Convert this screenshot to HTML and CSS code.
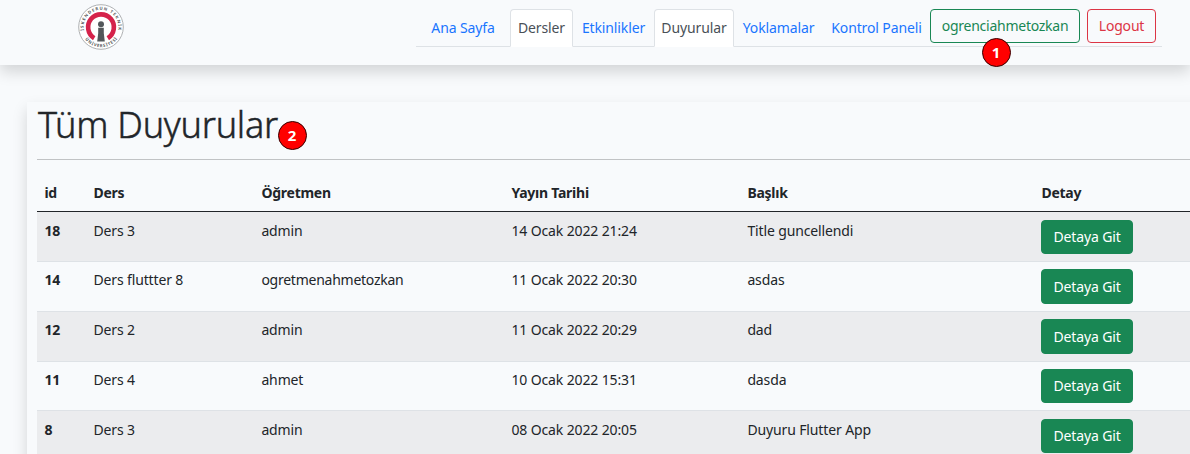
FILE: index.html
```html
<!DOCTYPE html>
<html lang="tr">
<head>
<meta charset="utf-8">
<title>Tüm Duyurular</title>
<link rel="stylesheet" href="styles.css">
</head>
<body>
<header class="navbar">
  <svg class="logo" viewBox="0 0 46 46" role="img" aria-label="İskenderun Teknik Üniversitesi">
    <defs>
      <path id="arc-top" d="M5.9 26.5 A17.4 17.4 0 1 1 40.1 26.5"/>
      <path id="arc-bottom" d="M6.5 34.6 A20.2 20.2 0 0 0 39.5 34.6"/>
    </defs>
    <circle cx="23" cy="23" r="22.3" fill="#fff" stroke="#9b9da0" stroke-width=".8"/>
    <path d="M16.2 34.2 A12.9 12.9 0 1 1 29.8 34.2" fill="none" stroke="#d5234b" stroke-width="4.6"/>
    <circle cx="23" cy="20.3" r="3" fill="#53575a"/>
    <path d="M20.2 23.8h5.6v5.4l1 8.3h-7.6l1-8.3z" fill="#53575a"/>
    <text class="logo-text"><textPath href="#arc-top" startOffset="0" textLength="60">İSKENDERUN TEKNİK</textPath></text>
    <text class="logo-text"><textPath href="#arc-bottom" startOffset="1" textLength="37">ÜNİVERSİTESİ</textPath></text>
  </svg>
  <nav class="tabs">
    <a class="tab t1">Ana Sayfa</a>
    <a class="tab t2 active">Dersler</a>
    <a class="tab t3">Etkinlikler</a>
    <a class="tab t4 active">Duyurular</a>
    <a class="tab t5">Yoklamalar</a>
    <a class="tab t6">Kontrol Paneli</a>
    <a class="btn outline-success">ogrenciahmetozkan<span class="marker marker-user">1</span></a>
    <a class="btn outline-danger">Logout</a>
  </nav>
</header>
<main class="card">
  <h1><span class="title">Tüm Duyurular<span class="marker marker-title">2</span></span></h1>
  <table>
    <colgroup><col class="c1"><col class="c2"><col class="c3"><col class="c4"><col class="c5"><col class="c6"></colgroup>
    <thead><tr><th>id</th><th>Ders</th><th>Öğretmen</th><th>Yayın Tarihi</th><th>Başlık</th><th>Detay</th></tr></thead>
    <tbody>
      <tr><th>18</th><td>Ders 3</td><td>admin</td><td>14 Ocak 2022 21:24</td><td>Title guncellendi</td><td><a class="btn success">Detaya Git</a></td></tr>
      <tr class="tall"><th>14</th><td>Ders fluttter 8</td><td class="tight">ogretmenahmetozkan</td><td>11 Ocak 2022 20:30</td><td>asdas</td><td><a class="btn success">Detaya Git</a></td></tr>
      <tr class="tall"><th>12</th><td>Ders 2</td><td>admin</td><td>11 Ocak 2022 20:29</td><td>dad</td><td><a class="btn success">Detaya Git</a></td></tr>
      <tr class="short"><th>11</th><td>Ders 4</td><td>ahmet</td><td>10 Ocak 2022 15:31</td><td>dasda</td><td><a class="btn success">Detaya Git</a></td></tr>
      <tr><th>8</th><td>Ders 3</td><td>admin</td><td>08 Ocak 2022 20:05</td><td>Duyuru Flutter App</td><td><a class="btn success">Detaya Git</a></td></tr>
    </tbody>
  </table>
</main>
</body>
</html>
```
FILE: styles.css
```css
* { box-sizing: border-box; }
html { overflow: hidden; }
body {
  margin: 0;
  height: 454px;
  overflow: hidden;
  background: #f8fafc;
  color: #212529;
  font: 14px/21px "Noto Sans", sans-serif;
}
.navbar {
  display: flex;
  align-items: flex-start;
  height: 65px;
  padding-left: 78px;
  background: #f8fafc;
  box-shadow: 0 7px 14px rgba(0, 0, 0, .15);
}
.logo { width: 46px; height: 46px; margin-top: 4px; flex: none; }
.logo-text { font: 700 4.2px "Noto Sans", sans-serif; fill: #53575a; }
.tabs {
  display: flex;
  align-items: flex-start;
  width: 746px;
  height: 47px;
  margin-left: 292px;
  padding-top: 9px;
  border-bottom: 1px solid #dee2e6;
}
.tab {
  height: 38px;
  padding-top: 7px;
  border: 1px solid transparent;
  border-radius: 4px 4px 0 0;
  color: #1a75ff;
  text-align: center;
  white-space: nowrap;
  letter-spacing: -.12px;
}
.tab.active {
  color: #495057;
  background: #fff;
  border-color: #dee2e6 #dee2e6 #fff;
}
.t1 { width: 94px; }
.t2 { width: 63px; }
.t3 { width: 81px; }
.t4 { width: 80px; }
.t5 { width: 88px; padding-left: 1px; }
.t6 { width: 108px; padding-left: 1px; }
.btn {
  position: relative;
  display: block;
  height: 34px;
  padding-top: 5px;
  border: 1px solid;
  border-radius: 4px;
  text-align: center;
  white-space: nowrap;
}
.outline-success { width: 150px; color: #198754; letter-spacing: -.25px; }
.outline-danger { width: 69px; margin-left: 7px; color: #dc3545; letter-spacing: -.2px; }
.success {
  width: 92px;
  color: #fff;
  background: #198754;
  border-color: #198754;
}
.marker {
  position: absolute;
  width: 29px;
  height: 29px;
  border: 1px solid #300;
  border-radius: 50%;
  background: #f00;
  color: #fff;
  font: 700 15px/27px "Noto Sans", sans-serif;
  letter-spacing: 0;
  text-align: center;
  -webkit-text-stroke: 0;
}
.marker-user { left: 50.5px; top: 27.5px; }
.marker-title { left: 240.5px; top: 19px; }
.card {
  width: 1240px;
  height: 380px;
  margin: 37px 0 0 27px;
  padding: 0 10px;
  background: #f8fafc;
  box-shadow: 0 7px 14px rgba(0, 0, 0, .15);
}
h1 {
  height: 58px;
  margin: 0;
  border-bottom: 1px solid #c1c3c5;
  font-size: 36px;
  font-weight: 300;
  line-height: 46px;
  letter-spacing: -.25px;
  -webkit-text-stroke: .5px #212529;
}
.title { position: relative; display: inline-block; padding-left: 1px; white-space: nowrap; }
table {
  width: 1220px;
  margin-top: 14px;
  border-collapse: separate;
  border-spacing: 0;
  table-layout: fixed;
}
.c1 { width: 49px; }
.c2 { width: 168px; }
.c3 { width: 250px; }
.c4 { width: 236px; }
.c5 { width: 294px; }
th, td {
  padding: 8px 7px 0 7.4px;
  border-bottom: 1px solid #dee2e6;
  text-align: left;
  vertical-align: top;
  white-space: nowrap;
  letter-spacing: -.13px;
}
td:last-child { padding-left: 7px; }
thead th { height: 38px; border-bottom-color: #212529; letter-spacing: -.25px; }
tbody tr { height: 50px; }
tbody tr.short { height: 49px; }
tbody .tall > *, tbody .short > * { padding-top: 7px; }
.tall .success { height: 35px; padding-top: 6px; }
tbody .tight { letter-spacing: -.25px; }
tbody tr:nth-child(odd) > * { background: #ebecee; }
```
